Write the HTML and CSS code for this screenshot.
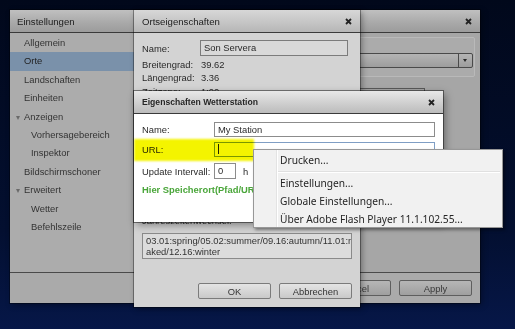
FILE: index.html
```html
<!DOCTYPE html>
<html lang="de">

<head>
    <meta charset="UTF-8">
    <title>Einstellungen</title>
    <link rel="stylesheet" href="styles.css">
</head>

<body>
    <div class="desk">

        <!-- Hauptfenster -->
        <section class="win win-main">
            <header class="win-title">
                <span>Einstellungen</span>
                <svg class="close" viewBox="0 0 7 7"><path d="M1 1 6 6M6 1 1 6" /></svg>
            </header>
            <div class="main-body">
                <ul class="nav">
                    <li>Allgemein</li>
                    <li class="sel">Orte</li>
                    <li>Landschaften</li>
                    <li>Einheiten</li>
                    <li class="grp">Anzeigen</li>
                    <li class="sub">Vorhersagebereich</li>
                    <li class="sub">Inspektor</li>
                    <li>Bildschirmschoner</li>
                    <li class="grp">Erweitert</li>
                    <li class="sub">Wetter</li>
                    <li class="sub">Befehlszeile</li>
                </ul>
                <div class="pane">
                    <div class="group">
                        <div class="combo"><span class="combo-btn"></span></div>
                    </div>
                    <div class="list"></div>
                </div>
            </div>
            <footer class="win-foot">
                <button class="btn btn-dark">Cancel</button>
                <button class="btn btn-dark">Apply</button>
            </footer>
        </section>

        <!-- Ortseigenschaften -->
        <section class="win win-place">
            <header class="win-title">
                <span>Ortseigenschaften</span>
                <svg class="close" viewBox="0 0 7 7"><path d="M1 1 6 6M6 1 1 6" /></svg>
            </header>
            <div class="place-body">
                <div class="field">
                    <label class="lbl-place">Name:</label>
                    <div class="input input-grey">Son Servera</div>
                </div>
                <div class="kv-list">
                    <div class="kv"><span>Breitengrad:</span>39.62</div>
                    <div class="kv"><span>Längengrad:</span>3.36</div>
                    <div class="kv"><span>Zeitzone:</span>1:00</div>
                </div>
                <div class="season-lbl">Jahreszeitenwechsel:</div>
                <div class="textarea">03.01:spring/05.02:summer/09.16:autumn/11.01:n<br>aked/12.16:winter</div>
                <div class="btn-row">
                    <button class="btn">OK</button>
                    <button class="btn">Abbrechen</button>
                </div>
            </div>
        </section>

        <!-- Eigenschaften Wetterstation -->
        <section class="win win-station">
            <header class="win-title">
                <span>Eigenschaften Wetterstation</span>
                <svg class="close" viewBox="0 0 7 7"><path d="M1 1 6 6M6 1 1 6" /></svg>
            </header>
            <div class="station-body">
                <div class="row">
                    <label class="lbl-station">Name:</label>
                    <div class="input input-wide">My Station</div>
                </div>
                <div class="row row-url">
                    <label class="lbl-station">URL:</label>
                    <div class="input input-wide input-focus"><span class="caret"></span></div>
                </div>
                <div class="row row-update">
                    <label class="lbl-station">Update Intervall:</label>
                    <div class="input input-small">0</div>
                    <span class="unit">h</span>
                    <div class="input input-small input-next"></div>
                </div>
                <div class="hint">Hier Speicherort(Pfad/URL) der Wetterdaten eintragen</div>
            </div>
        </section>

        <div class="marker"></div>

        <!-- Kontextmenü -->
        <ul class="ctx-menu">
            <li class="ctx-item">Drucken...</li>
            <li class="ctx-sep"></li>
            <li class="ctx-item">Einstellungen...</li>
            <li class="ctx-item">Globale Einstellungen...</li>
            <li class="ctx-item">Über Adobe Flash Player 11.1.102.55...</li>
        </ul>

    </div>
</body>

</html>
```

FILE: styles.css
```css
* {
    box-sizing: border-box;
}

body {
    margin: 0;
    background: #020a20;
}

.desk {
    position: relative;
    width: 515px;
    height: 329px;
    overflow: hidden;
    background: linear-gradient(#01081b, #030f30 70%, #061748);
    font-family: "Liberation Sans", Arial, sans-serif;
    font-size: 9.4px;
    color: #2a2a2a;
}

/* windows */

.win {
    position: absolute;
    display: flex;
    flex-direction: column;
    box-shadow: 0 0 0 1px rgba(0, 0, 0, 0.35), 2px 2px 6px rgba(0, 0, 0, 0.35);
}

.win-title {
    display: flex;
    align-items: center;
    justify-content: space-between;
    height: 23px;
    padding: 0 8px 0 8px;
    border-bottom: 1px solid #3a3a3a;
    font-size: 9.6px;
    color: #1c1c1c;
}

.close {
    width: 7px;
    height: 7px;
    stroke: #222;
    stroke-width: 1.8;
    fill: none;
}

.win-main {
    left: 10px;
    top: 10px;
    width: 470px;
    height: 293px;
    background: #a7a7a7;
}

.win-main .win-title {
    padding-left: 7px;
    background: linear-gradient(#c0c0c0, #a8a8a8 60%, #9c9c9c);
}

.main-body {
    display: flex;
    height: 239px;
}

.nav {
    list-style: none;
    margin: 0;
    padding: 1px 0 0;
    width: 124px;
    background: #acacac;
    color: #333;
}

.nav li {
    height: 18.4px;
    line-height: 18.4px;
    padding-left: 14px;
}

.nav li.sel {
    background: #7a91aa;
    color: #222;
}

.nav li.sub {
    padding-left: 21px;
}

.nav li.grp {
    position: relative;
}

.nav li.grp::before {
    content: "";
    position: absolute;
    left: 6px;
    top: 8px;
    border-left: 2.5px solid transparent;
    border-right: 2.5px solid transparent;
    border-top: 4px solid #6a6a6a;
}

.pane {
    flex: 1;
    background: #a6a6a6;
}

.group {
    height: 40px;
    margin: 4px 5px 0 8px;
    padding: 15px 1px 0 0;
    border: 1px solid #b9b9b9;
    border-radius: 2px;
    background: #ababab;
}

.combo {
    position: relative;
    height: 15px;
    border: 1px solid #4a4a4a;
    border-radius: 2px;
    background: linear-gradient(#b4b4b4, #9d9d9d);
}

.combo-btn {
    position: absolute;
    right: 0;
    top: 0;
    width: 14px;
    height: 13px;
    border-left: 1px solid #4a4a4a;
}

.combo-btn::after {
    content: "";
    position: absolute;
    left: 4px;
    top: 5px;
    border-left: 2.5px solid transparent;
    border-right: 2.5px solid transparent;
    border-top: 3px solid #2a2a2a;
}

.list {
    height: 134px;
    margin: 11px 55px 0 8px;
    border: 1px solid #595959;
    background: #a3a3a3;
}

.win-foot {
    display: flex;
    justify-content: flex-end;
    gap: 8px;
    height: 31px;
    padding: 7px 8px 0;
    border-top: 1px solid #4a4a4a;
    background: #aaaaaa;
}

.btn {
    width: 73px;
    height: 16px;
    padding: 0;
    border: 1px solid #7b7b7b;
    border-radius: 2px;
    background: linear-gradient(#e4e4e4, #c9c9c9);
    font-family: inherit;
    font-size: 9.4px;
    color: #333;
}

.btn-dark {
    border-color: #5e5e5e;
    background: linear-gradient(#b6b6b6, #9f9f9f);
    color: #3a3a3a;
}

/* Ortseigenschaften */

.win-place {
    left: 134px;
    top: 10px;
    width: 226px;
    height: 297px;
    background: #d3d3d3;
}

.win-place .win-title {
    background: linear-gradient(#d7d7d7, #c4c4c4 60%, #b6b6b6);
}

.place-body {
    display: flex;
    flex-direction: column;
    padding: 7px 8px 0;
}

.field {
    display: flex;
    align-items: center;
    height: 16px;
}

.lbl-place {
    width: 58px;
}

.input {
    height: 15px;
    padding: 0 3px;
    border: 1px solid #8c8c8c;
    background: #fff;
    line-height: 13px;
    white-space: nowrap;
    overflow: hidden;
}

.input-grey {
    width: 148px;
    height: 16px;
    line-height: 14px;
    background: #d9d9d9;
    border-color: #7c7c7c;
}

.kv-list {
    margin-top: 2px;
}

.kv {
    height: 13.4px;
    line-height: 13.4px;
}

.kv span {
    display: inline-block;
    width: 59px;
}

.season-lbl {
    margin-top: 117px;
    line-height: 12px;
}

.textarea {
    height: 26px;
    margin-top: 6px;
    padding: 2px 3px;
    border: 1px solid #8a8a8a;
    background: #dcdcdc;
    line-height: 10.4px;
    white-space: nowrap;
    overflow: hidden;
    color: #333;
}

.btn-row {
    display: flex;
    justify-content: flex-end;
    gap: 8px;
    margin-top: 24px;
}

/* Eigenschaften Wetterstation */

.win-station {
    left: 134px;
    top: 91px;
    width: 309px;
    height: 131px;
    background: #fff;
    box-shadow: 0 0 0 1px rgba(0, 0, 0, 0.45), 2px 3px 8px rgba(0, 0, 0, 0.4);
}

.win-station .win-title {
    background: linear-gradient(#e8e8e8, #cdcdcd 60%, #bcbcbc);
    font-weight: bold;
    font-size: 8.6px;
    color: #262626;
}

.station-body {
    display: flex;
    flex-direction: column;
    padding: 8px 8px 0;
}

.row {
    display: flex;
    align-items: center;
    height: 15px;
}

.row-url {
    margin-top: 5px;
}

.row-update {
    margin-top: 6px;
    height: 16px;
}

.lbl-station {
    width: 72px;
}

.input-wide {
    width: 221px;
}

.input-focus {
    border-color: #7f9ec4;
}

.caret {
    display: inline-block;
    width: 1px;
    height: 10px;
    margin-top: 1px;
    background: #222;
}

.input-small {
    width: 22px;
    height: 16px;
    line-height: 14px;
}

.unit {
    margin-left: 7px;
}

.input-next {
    width: 40px;
    margin-left: 5px;
}

/* the rest of the hint lies under the context menu */
.hint {
    width: 111px;
    margin-top: 4px;
    line-height: 14px;
    font-weight: bold;
    color: #4aa63a;
    white-space: nowrap;
    overflow: hidden;
}

/* yellow highlight over the URL row */

.marker {
    position: absolute;
    left: 134px;
    top: 139px;
    width: 120px;
    height: 22px;
    background: #f4f400;
    mix-blend-mode: multiply;
    filter: blur(0.8px);
}

/* context menu */

.ctx-menu {
    position: absolute;
    left: 253px;
    top: 149px;
    width: 250px;
    height: 79px;
    margin: 0;
    padding: 1px 0 0;
    list-style: none;
    border: 1px solid #979797;
    background: linear-gradient(90deg, #f1f1f1 22px, #e3e3e3 22px, #e3e3e3 23px, #fff 23px, #fff 24px, #f1f1f1 24px);
    box-shadow: 2px 2px 3px rgba(0, 0, 0, 0.4);
    font-family: "Noto Sans", sans-serif;
    font-size: 10.2px;
    color: #262626;
}

.ctx-item {
    height: 18px;
    line-height: 18px;
    padding-left: 26px;
    white-space: nowrap;
}

.ctx-item:first-child {
    height: 19px;
    line-height: 19px;
}

.ctx-sep {
    height: 2px;
    margin: 1px 2px 1px 24px;
    border-top: 1px solid #e0e0e0;
    border-bottom: 1px solid #fff;
}
```
